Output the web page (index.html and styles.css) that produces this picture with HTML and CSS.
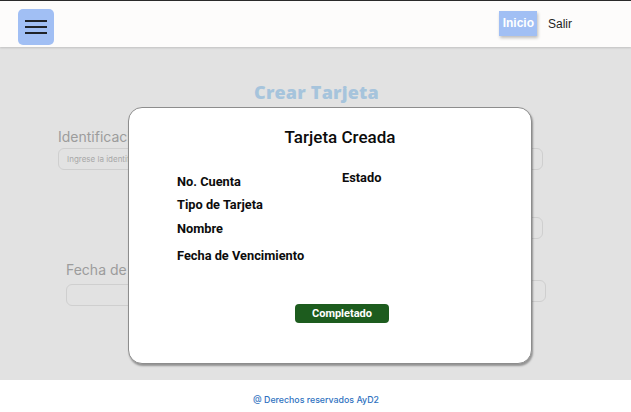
FILE: index.html
```html
<!DOCTYPE html>
<html lang="es">
<head>
<meta charset="utf-8">
<title>Crear Tarjeta</title>
<link rel="stylesheet" href="styles.css">
</head>
<body>
<div class="page">
  <header class="topbar">
    <button class="menu-btn" aria-label="Menú">
      <svg width="22" height="16" viewBox="0 0 22 16"><path d="M0 2h22M0 8h22M0 14h22" stroke="#1f2328" stroke-width="2.2"/></svg>
    </button>
    <nav class="nav">
      <a class="nav-link active">Inicio</a>
      <a class="nav-link">Salir</a>
    </nav>
  </header>
  <main class="main">
    <h1 class="form-title">Crear Tarjeta</h1>
    <div class="form-grid">
      <div class="field">
        <label class="field-label">Identificacion</label>
        <div class="input">Ingrese la identificacion</div>
      </div>
      <div class="field right">
        <label class="field-label hidden">Cuenta</label>
        <div class="input"></div>
      </div>
      <div class="field row2 hidden">
        <label class="field-label">Tipo</label>
        <div class="input"></div>
      </div>
      <div class="field right row2">
        <label class="field-label hidden">Nombre</label>
        <div class="input"></div>
      </div>
      <div class="field row3 shifted">
        <label class="field-label">Fecha de Vencimiento</label>
        <div class="input"></div>
      </div>
      <div class="field right row3">
        <label class="field-label hidden">Estado</label>
        <div class="input"></div>
      </div>
    </div>
    <div class="modal">
      <h2 class="modal-title">Tarjeta Creada</h2>
      <div class="modal-body">
        <div class="col">
          <div class="info i1">No. Cuenta</div>
          <div class="info i2">Tipo de Tarjeta</div>
          <div class="info i3">Nombre</div>
          <div class="info i4">Fecha de Vencimiento</div>
        </div>
        <div class="col col-right">
          <div class="info">Estado</div>
        </div>
      </div>
      <button class="done-btn">Completado</button>
    </div>
  </main>
  <footer class="footer">@ Derechos reservados AyD2</footer>
</div>
</body>
</html>
```

FILE: styles.css
```css
* { box-sizing: border-box; }
html, body { margin: 0; padding: 0; }
body {
  width: 631px;
  height: 412px;
  overflow: hidden;
  font-family: Inter, "Noto Sans", sans-serif;
  background: #e2e2e2;
}
.page {
  display: flex;
  flex-direction: column;
  height: 412px;
}
.topbar {
  height: 47px;
  flex: none;
  background: #fdfcfb;
  border-top: 1px solid #2a2a2a;
  display: flex;
  align-items: center;
  justify-content: space-between;
  padding: 0 60px 0 18px;
  box-shadow: 0 1px 2px rgba(0,0,0,0.15);
  position: relative;
  z-index: 2;
}
.menu-btn {
  width: 36px;
  height: 36px;
  margin-top: 8px;
  align-self: flex-start;
  border: none;
  border-radius: 5px;
  background: #a1bff4;
  display: flex;
  align-items: center;
  justify-content: center;
  padding: 0;
}
.nav {
  display: flex;
  align-items: center;
  gap: 11px;
  margin-top: -1px;
  margin-right: -1px;
}
.nav-link {
  font-family: "Liberation Sans", Arial, sans-serif;
  font-size: 12px;
  color: #1f1f1f;
}
.nav-link.active {
  background: #a1bff4;
  color: #fff;
  font-weight: bold;
  padding: 5px 3px 6px 4px;
  box-shadow: 1px 2px 3px rgba(0,0,0,0.25);
}
.main {
  flex: 1;
  position: relative;
  background: #e2e2e2;
}
.form-title {
  margin: 34px 0 0;
  text-align: center;
  font-family: "Open Sans", sans-serif;
  font-weight: 800;
  font-size: 18px;
  line-height: 22px;
  color: #a6c4dc;
  letter-spacing: 0.2px;
  padding-left: 2px;
}
.form-grid {
  display: grid;
  grid-template-columns: 232px 232px;
  justify-content: space-between;
  padding: 0 88px 0 58px;
  margin-top: 25px;
  row-gap: 22px;
}
.field { display: flex; flex-direction: column; }
.hidden { visibility: hidden; }
.field-label {
  font-size: 14px;
  color: #9c9c9c;
  line-height: 17px;
  margin-bottom: 3px;
}
.input {
  height: 22px;
  border: 1px solid #cfcfcf;
  border-radius: 6px;
  font-size: 8px;
  color: #a8a8a8;
  padding: 6px 8px;
  line-height: 9px;
}
.row2 { margin-top: 5px; }
.row3.shifted { margin-left: 8px; }
.row3.shifted .field-label { margin-bottom: 6px; }
.right.row3 { margin-top: -1px; margin-right: -3px; }
.modal {
  position: absolute;
  left: 128px;
  top: 60px;
  width: 404px;
  height: 257px;
  background: #fff;
  border: 1px solid #8d8d8d;
  border-radius: 14px;
  box-shadow: 1px 2px 2px rgba(0,0,0,0.35);
  font-family: Roboto, "Noto Sans", sans-serif;
  display: flex;
  flex-direction: column;
  align-items: center;
  z-index: 3;
}
.modal-title {
  margin: 19px 0 0 0;
  font-size: 17px;
  font-weight: 500;
  line-height: 20px;
  color: #0c0c0c;
  padding-left: 20px;
}
.modal-body {
  align-self: stretch;
  display: grid;
  grid-template-columns: 165px 1fr;
  padding-left: 48px;
  margin-top: 24px;
}
.col-right { margin-top: -1px; }
.info {
  font-size: 12.8px;
  font-weight: 700;
  color: #0c0c0c;
  line-height: 15px;
}
.i1 { margin-top: 3px; }
.i2 { margin-top: 8px; }
.i3 { margin-top: 9px; }
.i4 { margin-top: 12px; }
.done-btn {
  margin-top: 41px;
  margin-left: 24px;
  width: 94px;
  height: 19px;
  border: none;
  border-radius: 4px;
  background: #1d5c1e;
  color: #fff;
  font-family: Roboto, sans-serif;
  font-weight: 700;
  font-size: 11px;
  padding: 0;
}
.footer {
  height: 32px;
  flex: none;
  background: #fff;
  text-align: center;
  font-size: 8.8px;
  font-weight: 500;
  color: #2f72bf;
  padding-top: 14px;
  padding-left: 1px;
}
```
